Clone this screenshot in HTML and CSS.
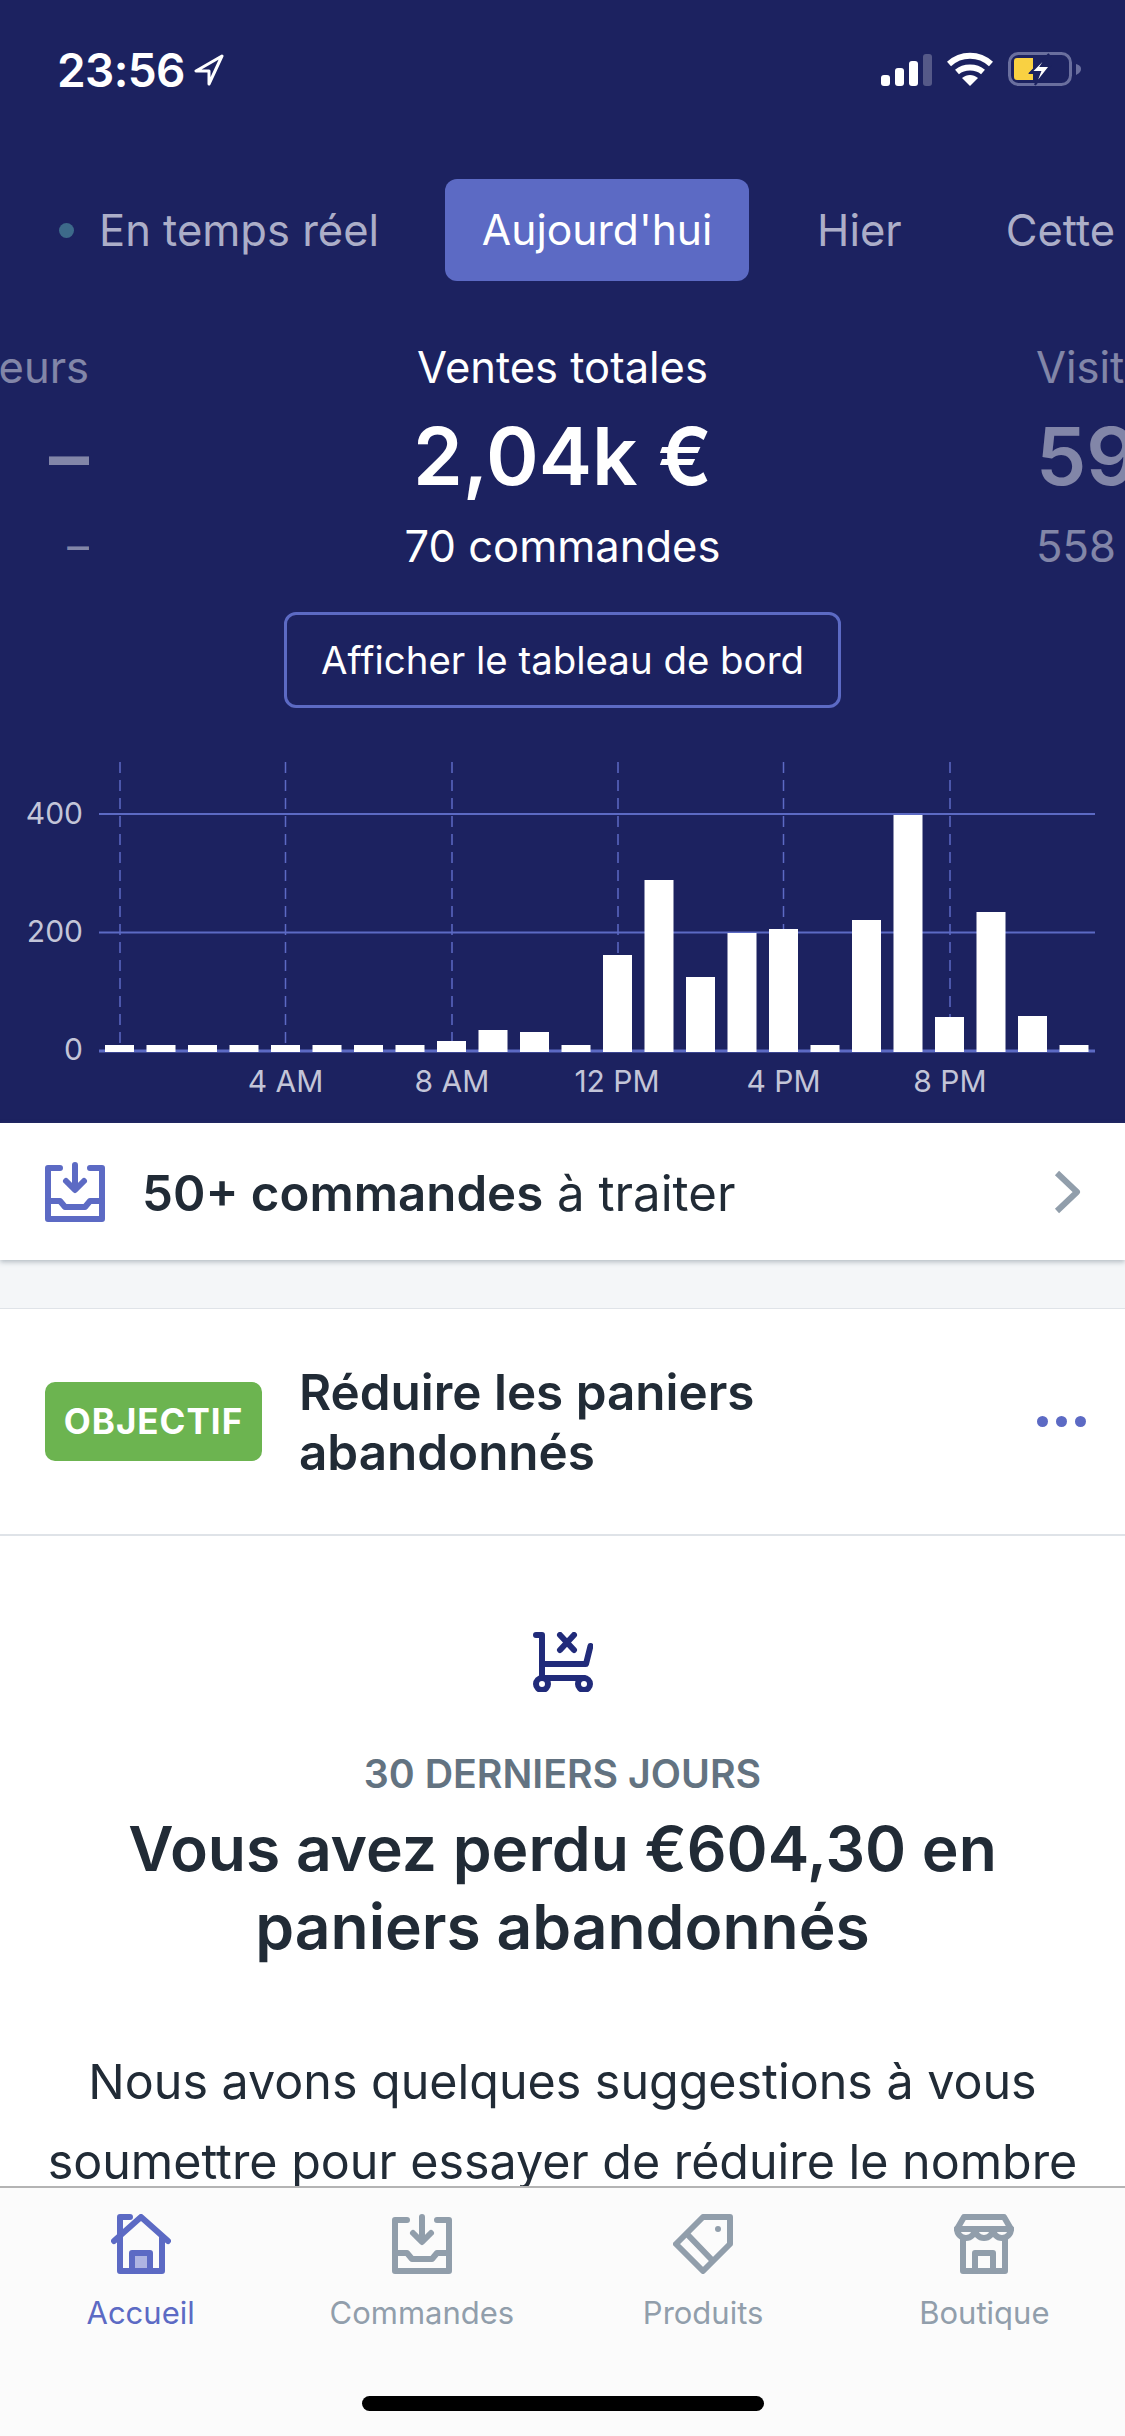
FILE: index.html
```html
<!DOCTYPE html>
<html lang="fr">
<head>
    <meta charset="UTF-8">
    <meta name="viewport" content="width=device-width, initial-scale=1.0">
    <title>Accueil</title>
    <link rel="stylesheet" href="styles.css">
</head>
<body>
    <div class="page">
        <div class="content">
            <div class="hero">
                <div class="status-bar">
                    <div class="status-time">
                        <span>23:56</span>
                        <svg class="status-arrow" width="30" height="32" viewBox="0 0 30 32">
                            <path d="M28 2 L2 17 H15 V30 Z"/>
                        </svg>
                    </div>
                    <div class="status-icons">
                        <div class="signal">
                            <span class="signal-bar bar-1"></span>
                            <span class="signal-bar bar-2"></span>
                            <span class="signal-bar bar-3"></span>
                            <span class="signal-bar bar-4"></span>
                        </div>
                        <svg class="wifi" width="46" height="34" viewBox="0 0 46 34">
                            <path d="M2 12 C14 1 32 1 44 12"/>
                            <path d="M10 20 C17 14 29 14 36 20"/>
                            <path class="wifi-dot" d="M23 34 L15 26 C20 22 26 22 31 26 Z"/>
                        </svg>
                        <svg class="battery" width="74" height="34" viewBox="0 0 74 34">
                            <rect class="battery-shell" x="1.5" y="1.5" width="61" height="31" rx="9"/>
                            <path class="battery-nub" d="M68 12 C72 13 73 15 73 17 C73 19 72 21 68 23 Z"/>
                            <path class="battery-level" d="M6 9 Q6 6 9 6 H25 V17 L20 22 H25 V28 H9 Q6 28 6 25 Z"/>
                            <path class="battery-bolt" d="M41 2 L23 20 H32 L27 33 L42 14 H33 Z"/>
                        </svg>
                    </div>
                </div>

                <div class="period-tabs">
                    <div class="period-tab live-tab"><span class="live-dot"></span>En temps réel</div>
                    <div class="period-tab active">Aujourd'hui</div>
                    <div class="period-tab">Hier</div>
                    <div class="period-tab">Cette semaine</div>
                </div>

                <div class="stats">
                    <div class="stat stat-left">
                        <div class="stat-label">Acheteurs</div>
                        <div class="stat-value">–</div>
                        <div class="stat-sub">–</div>
                    </div>
                    <div class="stat stat-main">
                        <div class="stat-label">Ventes totales</div>
                        <div class="stat-value">2,04k €</div>
                        <div class="stat-sub">70 commandes</div>
                    </div>
                    <div class="stat stat-right">
                        <div class="stat-label">Visiteurs</div>
                        <div class="stat-value">59</div>
                        <div class="stat-sub">558</div>
                    </div>
                </div>

                <div class="dashboard-link">
                    <button class="dashboard-btn">Afficher le tableau de bord</button>
                </div>

                <svg class="chart" width="1125" height="361" viewBox="0 762 1125 361">
                    <g class="grid-v">
                        <line x1="120" y1="762" x2="120" y2="1051"/>
                        <line x1="285.5" y1="762" x2="285.5" y2="1051"/>
                        <line x1="452" y1="762" x2="452" y2="1051"/>
                        <line x1="618" y1="762" x2="618" y2="1051"/>
                        <line x1="783.5" y1="762" x2="783.5" y2="1051"/>
                        <line x1="950" y1="762" x2="950" y2="1051"/>
                    </g>
                    <g class="grid-h">
                        <line x1="99" y1="814" x2="1095" y2="814"/>
                        <line x1="99" y1="932.5" x2="1095" y2="932.5"/>
                        <line class="grid-base" x1="99" y1="1051" x2="1095" y2="1051"/>
                    </g>
                    <g class="bars">
                        <rect x="105" y="1045" width="29" height="7"/>
                        <rect x="146.5" y="1045" width="29" height="7"/>
                        <rect x="188" y="1045" width="29" height="7"/>
                        <rect x="229.5" y="1045" width="29" height="7"/>
                        <rect x="271" y="1045" width="29" height="7"/>
                        <rect x="312.5" y="1045" width="29" height="7"/>
                        <rect x="354" y="1045" width="29" height="7"/>
                        <rect x="395.5" y="1045" width="29" height="7"/>
                        <rect x="437" y="1041" width="29" height="11"/>
                        <rect x="478.5" y="1030" width="29" height="22"/>
                        <rect x="520" y="1032" width="29" height="20"/>
                        <rect x="561.5" y="1045" width="29" height="7"/>
                        <rect x="603" y="955" width="29" height="97"/>
                        <rect x="644.5" y="880" width="29" height="172"/>
                        <rect x="686" y="977" width="29" height="75"/>
                        <rect x="727.5" y="933" width="29" height="119"/>
                        <rect x="769" y="929" width="29" height="123"/>
                        <rect x="810.5" y="1045" width="29" height="7"/>
                        <rect x="852" y="920" width="29" height="132"/>
                        <rect x="893.5" y="815" width="29" height="237"/>
                        <rect x="935" y="1017" width="29" height="35"/>
                        <rect x="976.5" y="912" width="29" height="140"/>
                        <rect x="1018" y="1016" width="29" height="36"/>
                        <rect x="1059.5" y="1045" width="29" height="7"/>
                    </g>
                    <g class="axis-y">
                        <text x="83" y="824">400</text>
                        <text x="83" y="942">200</text>
                        <text x="83" y="1060">0</text>
                    </g>
                    <g class="axis-x">
                        <text x="285.5" y="1092">4 AM</text>
                        <text x="452" y="1092">8 AM</text>
                        <text x="617" y="1092">12 PM</text>
                        <text x="783.5" y="1092">4 PM</text>
                        <text x="950" y="1092">8 PM</text>
                    </g>
                </svg>
            </div>

            <div class="orders-row">
                <svg class="icon icon-accent" width="60" height="60" viewBox="0 0 60 60">
                    <path d="M15 6 H3 V57 H57 V6 H45"/>
                    <path d="M30 3 V27 M21 19 L30 28 L39 19"/>
                    <path d="M3 39 H15 L20 45 H40 L45 39 H57"/>
                </svg>
                <div class="orders-text"><strong>50+ commandes</strong> à traiter</div>
                <svg class="chevron" width="28" height="44" viewBox="0 0 28 44">
                    <path d="M4 3 L24 22 L4 41"/>
                </svg>
            </div>

            <div class="gap"></div>

            <div class="objective-row">
                <span class="objective-badge">OBJECTIF</span>
                <div class="objective-title">Réduire les paniers abandonnés</div>
                <div class="more-dots">
                    <span></span><span></span><span></span>
                </div>
            </div>

            <div class="card">
                <svg class="icon icon-navy" width="60" height="60" viewBox="0 0 60 60">
                    <path d="M3 3 H9 V46"/>
                    <path d="M9 32 H53 L57.5 14"/>
                    <path d="M9 46 H51"/>
                    <path d="M27 3 L41 18 M41 3 L27 18"/>
                    <circle cx="9" cy="52" r="6"/>
                    <circle cx="51" cy="52" r="6"/>
                </svg>
                <div class="card-eyebrow">30 DERNIERS JOURS</div>
                <h2 class="card-title">Vous avez perdu €604,30 en paniers abandonnés</h2>
                <p class="card-text">Nous avons quelques suggestions à vous soumettre pour essayer de réduire le nombre de paniers abandonnés</p>
            </div>
        </div>

        <div class="tab-bar">
            <div class="tabs">
                <div class="tab tab-active">
                    <svg class="icon icon-accent" width="60" height="60" viewBox="0 0 60 60">
                        <rect class="door-fill" x="24" y="42" width="12" height="12"/>
                        <path d="M3 27 L30 3 L57 27"/>
                        <path d="M9 24 V3 H19"/>
                        <path d="M9 24 V57 H51 V24"/>
                        <path d="M21 57 V39 H39 V57"/>
                    </svg>
                    <span>Accueil</span>
                </div>
                <div class="tab">
                    <svg class="icon icon-muted" width="60" height="60" viewBox="0 0 60 60">
                        <path d="M15 6 H3 V57 H57 V6 H45"/>
                        <path d="M30 3 V27 M21 19 L30 28 L39 19"/>
                        <path d="M3 39 H15 L20 45 H40 L45 39 H57"/>
                    </svg>
                    <span>Commandes</span>
                </div>
                <div class="tab">
                    <svg class="icon icon-muted" width="60" height="60" viewBox="0 0 60 60">
                        <path d="M30 3 H57 V30 L30 57 L3 30 Z"/>
                        <path d="M14 20 L38 45"/>
                        <circle class="tag-hole" cx="45" cy="15" r="3"/>
                    </svg>
                    <span>Produits</span>
                </div>
                <div class="tab">
                    <svg class="icon icon-muted" width="60" height="60" viewBox="0 0 60 60">
                        <path d="M3 15 L10 3 H50 L57 15"/>
                        <path d="M3 15 H57"/>
                        <path d="M3 15 a9 9 0 0 0 18 0 a9 9 0 0 0 18 0 a9 9 0 0 0 18 0"/>
                        <path d="M9 25 V57 H51 V25"/>
                        <path d="M21 57 V39 H39 V57"/>
                    </svg>
                    <span>Boutique</span>
                </div>
            </div>
            <div class="home-indicator"></div>
        </div>
    </div>
</body>
</html>
```

FILE: styles.css
```css
:root {
    --navy: #1c2260;
    --accent: #5c6ac4;
    --ink: #212b36;
    --muted: #919eab;
    --line: #dfe3e8;
}

* {
    box-sizing: border-box;
}

body {
    margin: 0;
    font-family: Inter, "Noto Sans", sans-serif;
    background-color: white;
    color: var(--ink);
}

.page {
    width: 1125px;
    height: 2436px;
    display: flex;
    flex-direction: column;
    overflow: hidden;
}

.content {
    flex: 1;
    min-height: 0;
    overflow: hidden;
}

/* Dark top block */
.hero {
    height: 1123px;
    background-color: var(--navy);
    color: white;
    overflow: hidden;
}

.status-bar {
    height: 179px;
    padding: 52px 43px 0 57px;
    display: flex;
    justify-content: space-between;
    align-items: flex-start;
}

.status-time {
    display: flex;
    align-items: center;
    gap: 9px;
    font-size: 46px;
    font-weight: 600;
    line-height: 36px;
    letter-spacing: -0.6px;
}

.status-arrow path {
    fill: none;
    stroke: white;
    stroke-width: 3;
    stroke-linejoin: round;
}

.status-icons {
    display: flex;
    align-items: center;
    gap: 15px;
}

.signal {
    display: flex;
    align-items: flex-end;
    gap: 5px;
    height: 33px;
}

.signal-bar {
    width: 9px;
    background-color: white;
    border-radius: 3px;
}

.bar-1 { height: 11px; }
.bar-2 { height: 18px; }
.bar-3 { height: 25px; }
.bar-4 { height: 32px; opacity: 0.25; }

.wifi path {
    fill: none;
    stroke: white;
    stroke-width: 6;
}

.wifi .wifi-dot {
    fill: white;
    stroke: none;
}

.battery-shell {
    fill: none;
    stroke: #6a6f9e;
    stroke-width: 3;
}

.battery-nub {
    fill: #6a6f9e;
}

.battery-level {
    fill: #f9d142;
}

.battery-bolt {
    fill: white;
    stroke: var(--navy);
    stroke-width: 2;
}

.period-tabs {
    display: flex;
    align-items: center;
    height: 102px;
    padding-left: 59px;
    white-space: nowrap;
    overflow: hidden;
    font-size: 43.5px;
}

.period-tab {
    color: #acaec8;
    flex-shrink: 0;
}

.live-tab {
    display: flex;
    align-items: center;
    gap: 25px;
    margin-right: 66px;
}

.live-dot {
    width: 15px;
    height: 15px;
    border-radius: 50%;
    background-color: #3d6a8a;
}

.period-tab.active {
    width: 304px;
    height: 102px;
    color: white;
    background-color: var(--accent);
    border-radius: 12px;
    font-size: 42.6px;
    line-height: 102px;
    text-align: center;
    margin-right: 68px;
}

.period-tab:nth-child(3) {
    margin-right: 104px;
}

.stats {
    display: grid;
    grid-template-columns: 89px 1fr 89px;
    margin-top: 61px;
    text-align: center;
}

.stat {
    display: flex;
    flex-direction: column;
    white-space: nowrap;
    overflow: hidden;
}

.stat-left {
    align-items: flex-end;
    opacity: 0.45;
}

.stat-right {
    align-items: flex-start;
    opacity: 0.45;
}

.stat-main {
    align-items: center;
}

.stat-label {
    font-size: 43.5px;
    line-height: 50px;
}

.stat-value {
    margin-top: 14px;
    font-size: 80px;
    font-weight: 600;
    line-height: 100px;
}

.stat-sub {
    margin-top: 15px;
    font-size: 43.5px;
    line-height: 50px;
}

.dashboard-link {
    display: flex;
    justify-content: center;
    margin-top: 41px;
}

.dashboard-btn {
    width: 557px;
    height: 96px;
    background: none;
    border: 3px solid var(--accent);
    border-radius: 12px;
    color: white;
    font-family: inherit;
    font-size: 38.4px;
}

.chart {
    display: block;
    margin-top: 54px;
}

.grid-v line {
    stroke: var(--accent);
    stroke-width: 1.5;
    stroke-dasharray: 11 7;
}

.grid-h line {
    stroke: var(--accent);
    stroke-width: 2;
}

.grid-h .grid-base {
    stroke-width: 3;
}

.bars rect {
    fill: white;
}

.axis-y text,
.axis-x text {
    fill: #c3c5d8;
    font-size: 30px;
}

.axis-y text {
    text-anchor: end;
}

.axis-x text {
    text-anchor: middle;
}

/* Icons share one stroke */
.icon {
    display: block;
    flex-shrink: 0;
}

.icon path,
.icon circle {
    fill: none;
    stroke-width: 6;
    stroke-linecap: round;
    stroke-linejoin: round;
}

.icon-accent path { stroke: var(--accent); }
.icon-muted path { stroke: var(--muted); }
.icon-navy path,
.icon-navy circle { stroke: #212b7a; }

.door-fill {
    fill: #aeb4e2;
}

.icon .tag-hole {
    fill: var(--muted);
    stroke: none;
}

/* Orders row */
.orders-row {
    height: 137px;
    display: flex;
    align-items: center;
    padding: 0 44px 0 45px;
    background-color: white;
    box-shadow: 0 2px 5px rgba(99, 115, 129, 0.45);
    position: relative;
}

.orders-text {
    flex: 1;
    margin-left: 37px;
    margin-top: 2px;
    font-size: 49.2px;
}

.orders-text strong {
    font-weight: 600;
}

.chevron path {
    fill: none;
    stroke: var(--muted);
    stroke-width: 6;
    stroke-linejoin: round;
}

.gap {
    height: 49px;
    background-color: #f4f6f8;
    border-bottom: 1px solid var(--line);
}

/* Objective row */
.objective-row {
    height: 227px;
    display: flex;
    align-items: center;
    padding: 0 39px 0 45px;
    border-bottom: 2px solid var(--line);
}

.objective-badge {
    width: 217px;
    height: 79px;
    line-height: 79px;
    text-align: center;
    background-color: #6cb450;
    color: white;
    border-radius: 10px;
    font-size: 35px;
    font-weight: 700;
    letter-spacing: 1px;
    flex-shrink: 0;
}

.objective-title {
    width: 540px;
    margin-left: 37px;
    font-size: 49.4px;
    font-weight: 600;
    line-height: 60px;
}

.more-dots {
    margin-left: auto;
    display: flex;
    gap: 8px;
}

.more-dots span {
    width: 11px;
    height: 11px;
    border-radius: 50%;
    background-color: var(--accent);
}

/* Abandoned carts card */
.card {
    display: flex;
    flex-direction: column;
    align-items: center;
    padding-top: 96px;
    text-align: center;
}

.card-eyebrow {
    margin-top: 58px;
    font-size: 39.3px;
    font-weight: 600;
    line-height: 48px;
    color: #637381;
}

.card-title {
    width: 960px;
    margin: 12px 0 0;
    font-size: 62.3px;
    font-weight: 600;
    line-height: 78px;
}

.card-text {
    width: 1060px;
    margin: 76px 0 0;
    font-size: 48.4px;
    line-height: 80px;
}

/* Bottom tabs */
.tab-bar {
    height: 250px;
    background-color: #fbfbfb;
    border-top: 2px solid #b4b4b4;
    flex-shrink: 0;
}

.tabs {
    display: grid;
    grid-template-columns: repeat(4, 1fr);
    padding-top: 26px;
}

.tab {
    display: flex;
    flex-direction: column;
    align-items: center;
    gap: 21px;
    color: var(--muted);
    font-size: 31px;
    line-height: 36px;
}

.tab-active {
    color: var(--accent);
}

.home-indicator {
    width: 402px;
    height: 15px;
    margin: 65px auto 0;
    background-color: black;
    border-radius: 8px;
}
```
